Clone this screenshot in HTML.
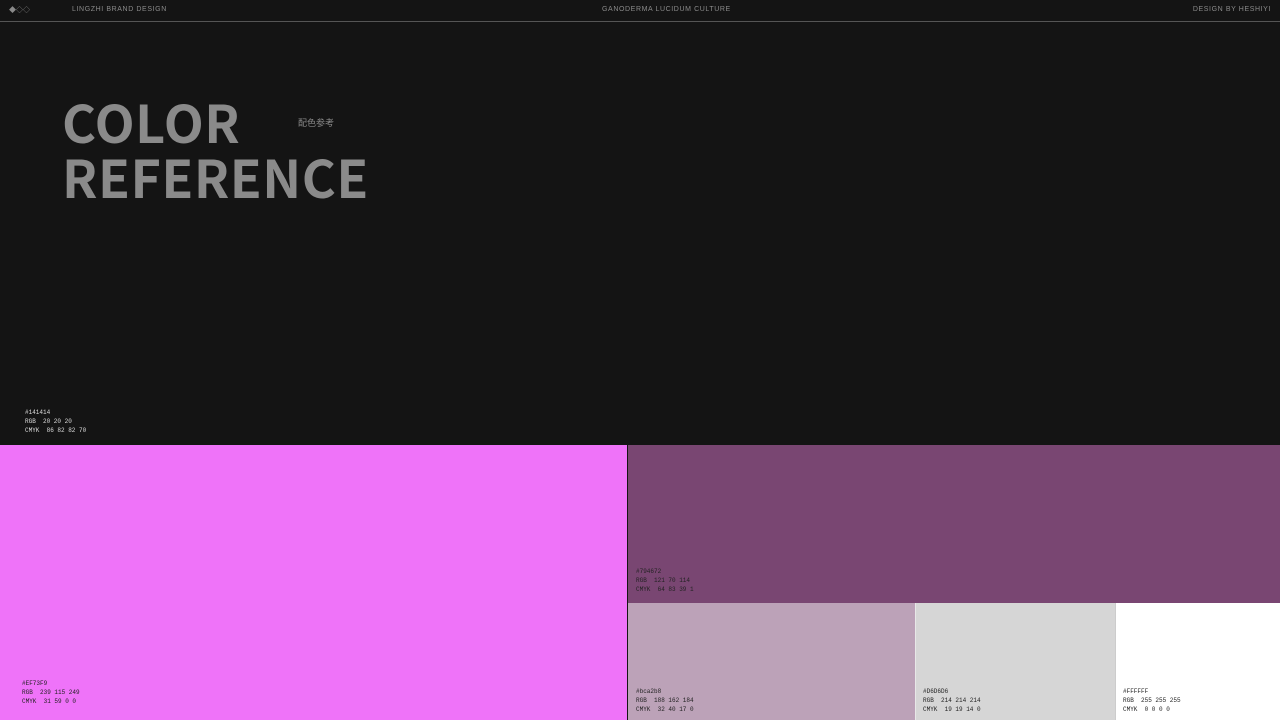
<!DOCTYPE html>
<html><head><meta charset="utf-8"><style>
*{margin:0;padding:0;box-sizing:border-box}
body{width:1280px;height:720px;overflow:hidden;background:#141414;position:relative;font-family:"Liberation Sans","Noto Sans CJK SC",sans-serif}
.hd{position:absolute;top:0;left:0;width:1280px;height:22px;border-bottom:1px solid #555;color:#8a8a8a;font-size:7px;letter-spacing:0.6px}
.hd span{position:absolute;top:6px}
.t{position:absolute;left:62px;color:#8a8a8a;font-family:"Noto Sans CJK SC",sans-serif;font-weight:700;font-size:52px;line-height:54px;letter-spacing:0.5px}
.sw{position:absolute}
.lb{position:absolute;font-family:"Liberation Mono",monospace;font-size:6px;line-height:9px;white-space:pre}
</style></head><body>
<div class="hd">
<span style="left:9px;top:5px;font-size:7px;letter-spacing:0">◆◇◇</span>
<span style="left:72px">LINGZHI BRAND DESIGN</span>
<span style="left:602px">GANODERMA LUCIDUM CULTURE</span>
<span style="right:9px">DESIGN BY HESHIYI</span>
</div>
<div class="t" style="top:94px">COLOR</div>
<div class="t" style="top:149px">REFERENCE</div>
<div style="position:absolute;left:298px;top:116px;font-size:9px;color:#8a8a8a;font-family:'Noto Sans CJK SC',sans-serif">配色参考</div>
<div class="lb" style="left:25px;top:408px;color:#ddd">#141414
RGB  20 20 20
CMYK  86 82 82 70</div>
<div class="sw" style="left:0;top:445px;width:627px;height:275px;background:#EF73F9"><div class="lb" style="left:22px;top:234px;color:#222">#EF73F9
RGB  239 115 249
CMYK  31 59 0 0</div></div>
<div class="sw" style="left:628px;top:445px;width:652px;height:158px;background:#794672"><div class="lb" style="left:8px;top:122px;color:#222">#794672
RGB  121 70 114
CMYK  64 83 39 1</div></div>
<div class="sw" style="left:628px;top:603px;width:287px;height:117px;background:#bca2b8"><div class="lb" style="left:8px;top:84px;color:#222">#bca2b8
RGB  188 162 184
CMYK  32 40 17 0</div></div>
<div class="sw" style="left:915px;top:603px;width:200px;height:117px;background:#D6D6D6;border-left:1px solid #e8e8e8"><div class="lb" style="left:7px;top:84px;color:#222">#D6D6D6
RGB  214 214 214
CMYK  19 19 14 0</div></div>
<div class="sw" style="left:1115px;top:603px;width:165px;height:117px;background:#FFFFFF;border-left:1px solid #ccc"><div class="lb" style="left:7px;top:84px;color:#222">#FFFFFF
RGB  255 255 255
CMYK  0 0 0 0</div></div>
</body></html>
